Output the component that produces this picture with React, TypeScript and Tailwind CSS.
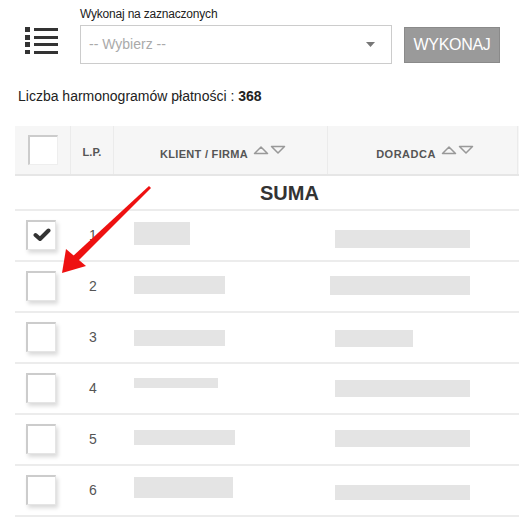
import { FC } from 'react';

const rows = [
  { n: 1, checked: true, k: [134, 56, 11, 23], d: [335, 135, 19, 18] },
  { n: 2, checked: false, k: [134, 91, 14, 18], d: [330, 140, 14, 19] },
  { n: 3, checked: false, k: [134, 91, 17, 16], d: [335, 78, 17, 17] },
  { n: 4, checked: false, k: [134, 84, 14, 10], d: [335, 135, 16, 17] },
  { n: 5, checked: false, k: [134, 101, 15, 15], d: [335, 135, 15, 17] },
  { n: 6, checked: false, k: [134, 99, 11, 21], d: [335, 135, 19, 15] },
];

const ListIcon: FC = () => (
  <svg width="34" height="28" viewBox="0 0 34 28">
    {[1, 9, 16, 24].map((y) => (
      <g key={y} fill="#333">
        <rect x="0" y={y} width="5" height="5" />
        <rect x="9" y={y + 1} width="24" height="3" />
      </g>
    ))}
  </svg>
);

const SortIcons: FC = () => (
  <svg width="34" height="10" viewBox="0 0 34 10" className="inline-block ml-[5px] -mt-2">
    <path d="M1.5 8.5 L8 2 L14.5 8.5 Z" fill="none" stroke="#999" strokeWidth="1.5" strokeLinejoin="round" />
    <path d="M18.5 1.5 L31.5 1.5 L25 8 Z" fill="none" stroke="#999" strokeWidth="1.5" strokeLinejoin="round" />
  </svg>
);

const Checkbox: FC<{ checked?: boolean; header?: boolean }> = ({ checked, header }) => (
  <div
    className={`w-[30px] h-[30px] bg-white flex items-center justify-center border-l-2 border-t-2 border-[#ccc] border-r border-b ${
      header ? 'border-r-[#eee] border-b-[#eee]' : 'border-r-[#e5e5e5] border-b-[#e5e5e5] shadow-[2px_3px_4px_rgba(0,0,0,0.15)]'
    }`}
  >
    {checked && (
      <svg width="18" height="14" viewBox="0 0 18 14">
        <path d="M2.5 7 L7 11 L15.5 2.5" fill="none" stroke="#333" strokeWidth="4" strokeLinecap="round" strokeLinejoin="round" />
      </svg>
    )}
  </div>
);

const Blur: FC<{ left: number; width: number; top: number; h: number; col: number }> = ({ left, width, top, h, col }) => (
  <div
    className="absolute bg-[#e4e4e4] blur-[0.5px]"
    style={{ left: left - col, width, top, height: h }}
  />
);

const App: FC = () => {
  return (
    <div className="relative w-[519px] h-[521px] overflow-hidden bg-white font-['Liberation_Sans',Arial,sans-serif] text-[#222]">
      <div className="flex pl-[25px] pt-[7px]">
        <div className="w-[55px] pt-[19px]">
          <ListIcon />
        </div>
        <div className="flex flex-col">
          <div className="text-[12px] leading-[14px] tracking-[-0.2px] text-[#222]">Wykonaj na zaznaczonych</div>
          <div className="flex items-start mt-[4px]">
            <div className="w-[312px] h-[39px] border border-[#ccc] flex items-center justify-between pl-[8px] pr-[16px]">
              <span className="text-[14px] text-[#aaa]">-- Wybierz --</span>
              <svg width="9" height="5" viewBox="0 0 9 5">
                <path d="M0 0 L9 0 L4.5 5 Z" fill="#777" />
              </svg>
            </div>
            <button className="ml-[12px] mt-[2px] w-[96px] h-[36px] bg-[#9a9a9a] border border-[#8a8a8a] text-white text-[16px] tracking-[-0.3px]">
              WYKONAJ
            </button>
          </div>
        </div>
      </div>

      <div className="pl-[18px] mt-[24px] text-[14px] leading-[16px] text-[#222]">
        Liczba harmonogramów płatności : <span className="font-bold">368</span>
      </div>

      <div className="ml-[15px] mt-[22px] w-[560px]">
        <div className="grid grid-cols-[56px_43px_214px_190px_1fr] h-[50px] bg-[#f6f6f6] border-b-2 border-[#e6e6e6] text-[11px] font-bold text-[#555]">
          <div className="flex items-center justify-center border-r border-[#ebebeb]">
            <Checkbox header />
          </div>
          <div className="flex items-center justify-center border-r border-[#ebebeb] pt-[4px]">L.P.</div>
          <div className="flex items-center justify-center border-r border-[#ebebeb] pt-[8px] pl-[6px] tracking-[0.3px]">
            KLIENT / FIRMA<SortIcons />
          </div>
          <div className="flex items-center justify-center border-r border-[#ebebeb] pt-[8px] pl-[6px] tracking-[0.5px]">
            DORADCA<SortIcons />
          </div>
          <div />
        </div>

        <div className="h-[35px] border-b-2 border-[#ececec] flex items-center pl-[245px] text-[20px] font-bold text-[#333]">
          SUMA
        </div>

        {rows.map((r) => (
          <div key={r.n} className="grid grid-cols-[56px_43px_214px_190px_1fr] h-[51px] border-b-2 border-[#ececec]">
            <div className="flex items-center pl-[11px] pb-[2px]">
              <Checkbox checked={r.checked} />
            </div>
            <div className="flex items-center justify-center text-[14px] text-[#555] pl-[1px]">{r.n}</div>
            <div className="relative">
              <Blur left={r.k[0]} width={r.k[1]} top={r.k[2]} h={r.k[3]} col={114} />
            </div>
            <div className="relative">
              <Blur left={r.d[0]} width={r.d[1]} top={r.d[2]} h={r.d[3]} col={328} />
            </div>
            <div />
          </div>
        ))}
      </div>

      <svg className="absolute left-0 top-0 pointer-events-none" width="519" height="521">
        <path d="M149 186 L151 188 L77 262 L72 257 Z" fill="#e11" />
        <path d="M62 273 L66 249 L86 266 Z" fill="#e11" />
      </svg>
    </div>
  );
};

export default App;
